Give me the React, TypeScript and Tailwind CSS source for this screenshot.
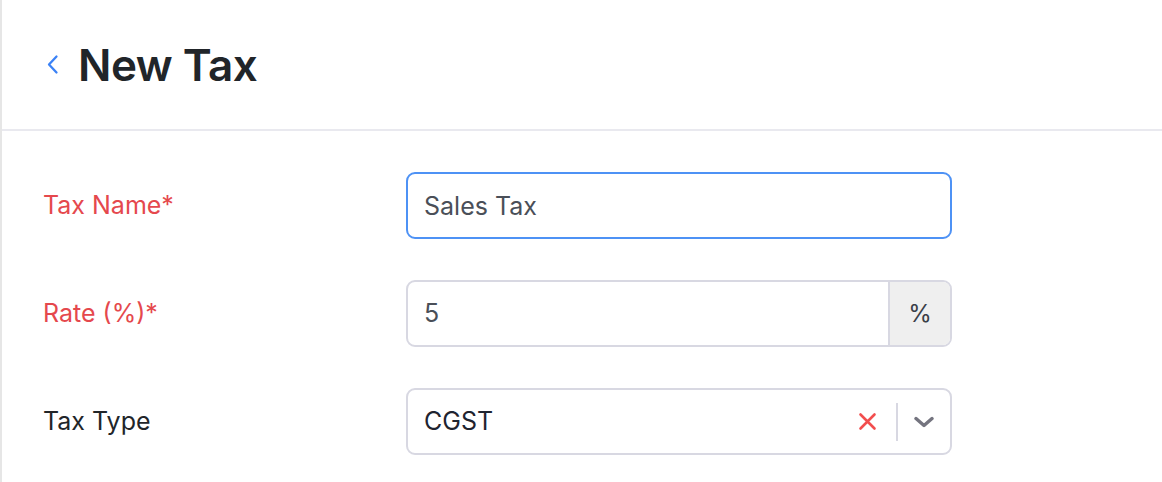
import { useState } from 'react';

export default function App() {
  const [name, setName] = useState('Sales Tax');
  const [rate, setRate] = useState('5');

  return (
    <div
      className="min-h-[482px] w-[1162px] bg-white border-l-2 border-[#e6e6e6]"
      style={{ fontFamily: 'Inter, "Noto Sans", sans-serif' }}
    >
      <div className="h-[131px] flex items-center pl-[44px] border-b-2 border-[#e9e9ef]">
        <button className="text-[#3b82f6] mr-[19px] flex items-center">
          <svg width="13" height="21" viewBox="0 0 13 21" fill="none">
            <path d="M10.5 2.5L3 10.5L10.5 18.5" stroke="currentColor" strokeWidth="2.3" strokeLinecap="round" strokeLinejoin="round" />
          </svg>
        </button>
        <h1 className="text-[44px] font-semibold text-[#212529] tracking-[-0.5px]">New Tax</h1>
      </div>

      <div className="pt-[41px] pl-[41px] flex flex-col gap-[41px]">
        <div className="flex items-center">
          <label className="w-[363px] text-[25px] text-[#e5484d]">Tax Name*</label>
          <input
            type="text"
            value={name}
            onChange={(e) => setName(e.target.value)}
            className="w-[546px] h-[67px] rounded-[9px] border-2 border-[#4e92f5] px-4 text-[25px] text-[#4a4f58] outline-none"
          />
        </div>

        <div className="flex items-center">
          <label className="w-[363px] text-[25px] text-[#e5484d]">Rate (%)*</label>
          <div className="w-[546px] h-[67px] rounded-[9px] border-2 border-[#d8d8e2] flex overflow-hidden">
            <input
              type="text"
              value={rate}
              onChange={(e) => setRate(e.target.value)}
              className="flex-1 min-w-0 px-4 text-[25px] text-[#4a4f58] outline-none"
            />
            <div className="w-[62px] bg-[#efefef] border-l-2 border-[#d8d8e2] flex items-center justify-center text-[24px] text-[#3a3f48]">
              %
            </div>
          </div>
        </div>

        <div className="flex items-center">
          <label className="w-[363px] text-[25px] text-[#212529]">Tax Type</label>
          <div className="w-[546px] h-[67px] rounded-[9px] border-2 border-[#d8d8e2] flex items-center pl-4 pr-4">
            <span className="flex-1 text-[25px] text-[#1f2430]">CGST</span>
            <button className="text-[#f24e4e] mr-[19px] flex items-center">
              <svg width="19" height="19" viewBox="0 0 19 19" fill="none">
                <path d="M2.5 2.5L16.5 16.5M16.5 2.5L2.5 16.5" stroke="currentColor" strokeWidth="2.6" strokeLinecap="round" />
              </svg>
            </button>
            <div className="w-[2px] h-[38px] bg-[#d8d8e2] mr-[16px]" />
            <svg width="20" height="12" viewBox="0 0 20 12" fill="none" className="text-[#74747f]">
              <path d="M2 2.5L10 9.5L18 2.5" stroke="currentColor" strokeWidth="3.4" strokeLinecap="round" strokeLinejoin="round" />
            </svg>
          </div>
        </div>
      </div>
    </div>
  );
}
